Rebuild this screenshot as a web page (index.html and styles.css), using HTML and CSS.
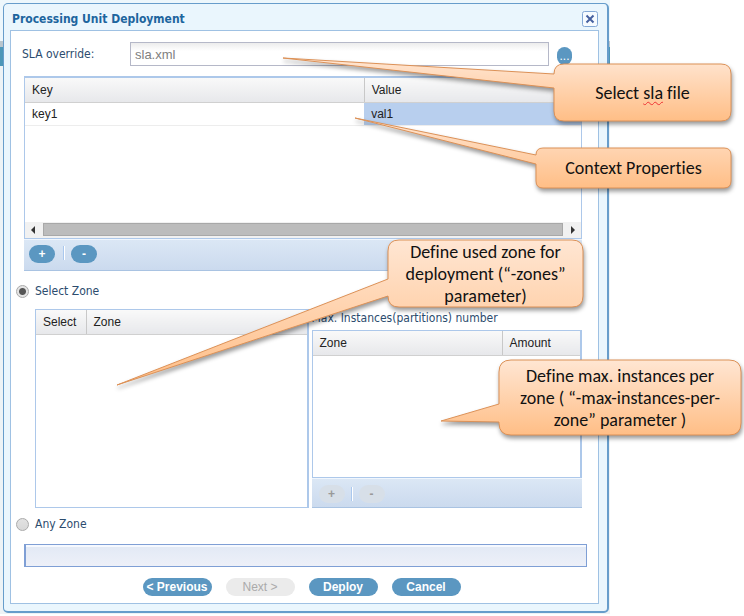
FILE: index.html
```html
<!DOCTYPE html>
<html lang="en">
<head>
<meta charset="utf-8">
<title>Processing Unit Deployment</title>
<link rel="stylesheet" href="styles.css">
</head>
<body>
<main class="stage">
  <div class="backdrop">
    <section class="dialog" aria-labelledby="dialog-title">
      <header class="dialog-header">
        <h1 id="dialog-title">Processing Unit Deployment</h1>
        <button class="close" type="button" aria-label="Close">
          <svg viewBox="0 0 16 16" width="16" height="16"><rect x="0.500" y="0.500" width="15" height="15" rx="2" fill="#f6fbff" stroke="#84a9d6" stroke-width="1"/><path d="M4.500 4.500l7 7M11.500 4.500l-7 7" stroke="#4660a0" stroke-width="2"/></svg>
        </button>
      </header>
      <form class="dialog-body">
        <div class="sla">
          <label for="sla">SLA override:</label>
          <input id="sla" type="text" placeholder="sla.xml">
          <button class="browse" type="button" aria-label="Browse">...</button>
        </div>
        <div class="properties">
          <div class="grid">
            <table>
              <colgroup><col class="col-key"><col></colgroup>
              <thead><tr><th>Key</th><th>Value</th></tr></thead>
              <tbody><tr><td>key1</td><td class="selected">val1</td></tr></tbody>
            </table>
            <div class="scrollbar">
              <svg viewBox="0 0 18 16" width="18" height="16"><path d="M10 4v8l-4-4z" fill="#333"/></svg>
              <span class="thumb"></span>
              <svg viewBox="0 0 18 16" width="18" height="16"><path d="M8 4v8l4-4z" fill="#333"/></svg>
            </div>
          </div>
          <div class="toolbar">
            <button class="small" type="button">+</button>
            <span class="divider"></span>
            <button class="small" type="button">-</button>
          </div>
        </div>
        <div class="choice">
          <input id="select-zone" type="radio" name="zone" checked>
          <label for="select-zone">Select Zone</label>
        </div>
        <div class="zones">
          <div class="grid">
            <table>
              <colgroup><col class="col-select"><col></colgroup>
              <thead><tr><th>Select</th><th>Zone</th></tr></thead>
            </table>
          </div>
          <div class="instances">
            <h2>Max. Instances(partitions) number</h2>
            <div class="grid">
              <table>
                <colgroup><col><col class="col-amount"></colgroup>
                <thead><tr><th>Zone</th><th>Amount</th></tr></thead>
              </table>
            </div>
            <div class="toolbar compact">
              <button class="small" type="button" disabled>+</button>
              <span class="divider"></span>
              <button class="small" type="button" disabled>-</button>
            </div>
          </div>
        </div>
        <div class="choice">
          <input id="any-zone" type="radio" name="zone">
          <label for="any-zone">Any Zone</label>
        </div>
        <div class="status"></div>
        <footer class="actions">
          <button type="button">&lt; Previous</button>
          <button type="button" disabled>Next &gt;</button>
          <button type="button">Deploy</button>
          <button type="button">Cancel</button>
        </footer>
      </form>
    </section>
  </div>

  <svg class="defs" width="0" height="0" aria-hidden="true">
    <defs>
      <linearGradient id="peach" x1="0" y1="0" x2="0" y2="1">
        <stop offset="0" stop-color="#ffe6d3"/><stop offset="1" stop-color="#ffbe86"/>
      </linearGradient>
      <linearGradient id="peach-long" gradientUnits="userSpaceOnUse" x1="0" y1="0" x2="0" y2="145">
        <stop offset="0" stop-color="#ffe6d3"/><stop offset="1" stop-color="#ffbe86"/>
      </linearGradient>
    </defs>
  </svg>
  <div class="callout callout-file">
    <svg width="177" height="57"><path fill="url(#peach)" d="M10 0H167Q177 0 177 10V47Q177 57 167 57H10Q0 57 0 47V24L-271 -6L0 10Q0 0 10 0Z"/></svg>
    <p>Select <span class="typo">sla</span> file</p>
  </div>
  <div class="callout callout-context">
    <svg width="195" height="40"><path fill="url(#peach)" d="M7 0H188Q195 0 195 7V33Q195 40 188 40H7Q0 40 0 33V16L-181 -30L0 7Q0 0 7 0Z"/></svg>
    <p>Context Properties</p>
  </div>
  <div class="callout callout-zone">
    <svg width="195" height="67"><path fill="url(#peach-long)" d="M11 0H184Q195 0 195 11V56Q195 67 184 67H11Q0 67 0 56L-271 145L0 39V11Q0 0 11 0Z"/></svg>
    <p>Define used zone for<br>deployment (“-zones”<br>parameter)</p>
  </div>
  <div class="callout callout-max">
    <svg width="242" height="75"><path fill="url(#peach)" d="M12 0H230Q242 0 242 12V63Q242 75 230 75H12Q0 75 0 63V62L-58 61L0 44V12Q0 0 12 0Z"/></svg>
    <p>Define max. instances per<br>zone ( “-max-instances-per-<br>zone” parameter )</p>
  </div>
</main>
</body>
</html>
```
FILE: styles.css
```css
* { box-sizing: border-box; }
body { margin: 0; background: #fff; font: 12px/16px "Liberation Sans", Arial, sans-serif; color: #222; }
button { font: inherit; padding: 0; border: 0; }
.stage { position: relative; }
.backdrop {
  margin-right: 134px;
  padding: 3px 1px 1px 3px;
  background: linear-gradient(#edf7fc 41px, #b9c6ce 41px, #b9c6ce 47px, #4d97b8 47px, #4d97b8 66px, #edf3f6 66px);
}
.dialog {
  padding: 0 8px 7px 6px;
  border: 1px solid #679dcb;
  border-right: 2px solid #679dcb;
  border-bottom: 2px solid #679dcb;
  border-radius: 5px;
  background: #eaf6fd;
}
.dialog-header { display: flex; align-items: center; justify-content: space-between; height: 26px; padding: 3px 1px 0 2px; }
h1 { margin: 0; font: bold 12px/16px "DejaVu Sans Condensed", Tahoma, sans-serif; color: #1d659e; }
.close { display: flex; background: none; }
.dialog-body { display: block; padding: 11px 11px 7px 13px; border: 1px solid #9fc1e3; background: #fff; }
label, h2 { font: 12px/16px "DejaVu Sans Condensed", Tahoma, sans-serif; color: #2c4c6e; }
h2 { margin: 0 0 4px; }

.sla { display: flex; align-items: center; margin: 0 15px 10px -2px; }
.sla label { width: 108px; }
.sla input {
  flex: 1; min-width: 0; height: 24px; padding: 0 4px;
  border: 1px solid #b5b8c8;
  background: linear-gradient(#ececec, #fff 8px);
  font: 13px/18px "Liberation Sans", Arial, sans-serif; color: #777;
}
.sla input::placeholder { color: #808080; opacity: 1; }
.browse { width: 15px; height: 18px; margin: 4px 0 0 8px; border-radius: 8px; background: #5b97c1; color: #fff; line-height: 18px; }

.properties { margin-right: 5px; }
.grid { display: flex; flex-direction: column; border: 1px solid #adc8ea; background: #fff; }
.properties .grid { height: 163px; border-top-width: 2px; }
table { width: 100%; border-collapse: collapse; table-layout: fixed; }
th, td { height: 24px; padding: 0 7px; text-align: left; font-weight: normal; }
th { border-bottom: 1px solid #d0d0d0; background: linear-gradient(#f9f9f9, #e7e8eb); }
th + th { border-left: 1px solid #c8c8c8; }
td { height: 23px; border-bottom: 1px solid #ededed; }
.selected { background: #b8cfee; }
.col-key { width: 61%; }
.col-select { width: 50px; }
.col-amount { width: 78px; }
.scrollbar { display: flex; height: 16px; margin-top: auto; background: #f1f1f1; }
.thumb { flex: 1; margin: 1px 0 2px; border: 1px solid #a8a8a8; background: #bcbcbc; }
.toolbar {
  display: flex; align-items: center; height: 32px; padding: 0 5px 3px;
  border-top: 1px solid #f0f6fd; border-bottom: 1px solid #a9c3e2;
  background: linear-gradient(#dbe7f5, #cbdaee);
}
.small { width: 26px; height: 18px; border-radius: 9px; background: #5b97c1; color: #fff; font-weight: bold; line-height: 18px; }
.divider { width: 2px; height: 14px; margin: 0 6px 2px 8px; border-left: 1px solid #aac8ee; border-right: 1px solid #fff; }
.compact { height: 30px; padding: 1px 7px 0; }
.compact .divider { margin: 0 6px; }
.small:disabled { background: #d7dfe8; color: #999; }

.choice { display: flex; align-items: center; height: 16px; margin: 12px 0 10px -8px; }
.choice input {
  appearance: none; width: 13px; height: 13px; margin: 0 6px 0 0;
  border: 1px solid #aaa; border-radius: 50%;
  background: linear-gradient(#e2e2e2, #d8d8d8);
}
.choice input:checked { background: radial-gradient(circle, #555 3px, #e4e4e4 4px); }
.zones { display: flex; gap: 3px; height: 199px; margin: 0 5px 0 11px; }
.zones > * { flex: 1; min-width: 0; }
.zones .grid { border-width: 1px 2px 1px 1px; }
.instances { display: flex; flex-direction: column; padding-top: 1px; }
.instances .grid { flex: 1; }
.zones + .choice { margin-top: 8px; margin-bottom: 12px; }
.status { height: 23px; border: 1px solid #7f9fd5; border-left-width: 2px; background: linear-gradient(#e2e9f5, #edf0f8); box-shadow: inset 0 2px #f6f9ff; }
.actions { display: flex; justify-content: center; gap: 14px; margin: 11px 8px 0 0; }
.actions button { width: 69px; height: 18px; border-radius: 9px; background: #5b97c1; color: #fff; font-weight: bold; line-height: 18px; }
.actions button:disabled { background: #ebebeb; color: #aaa; font-weight: normal; }

.defs { position: absolute; }
.callout { position: absolute; display: flex; align-items: center; justify-content: center; }
.callout svg { position: absolute; inset: 0; overflow: visible; filter: drop-shadow(1px 3px 2px rgb(0 0 0 / 40%)); }
.callout path { stroke: #dc9157; stroke-width: 1; }
.callout p { position: relative; margin: 0; font: 18px/22px Carlito, Calibri, Lato, sans-serif; font-variant-ligatures: none; color: #111; text-align: center; white-space: nowrap; }
.typo { text-decoration: underline wavy #e33 1px; text-underline-offset: 2px; }
.callout-file { left: 554px; top: 64px; width: 177px; height: 57px; }
.callout-context { left: 536px; top: 148px; width: 195px; height: 40px; }
.callout-zone { left: 388px; top: 240px; width: 195px; height: 67px; }
.callout-max { left: 499px; top: 360px; width: 242px; height: 75px; }
```
